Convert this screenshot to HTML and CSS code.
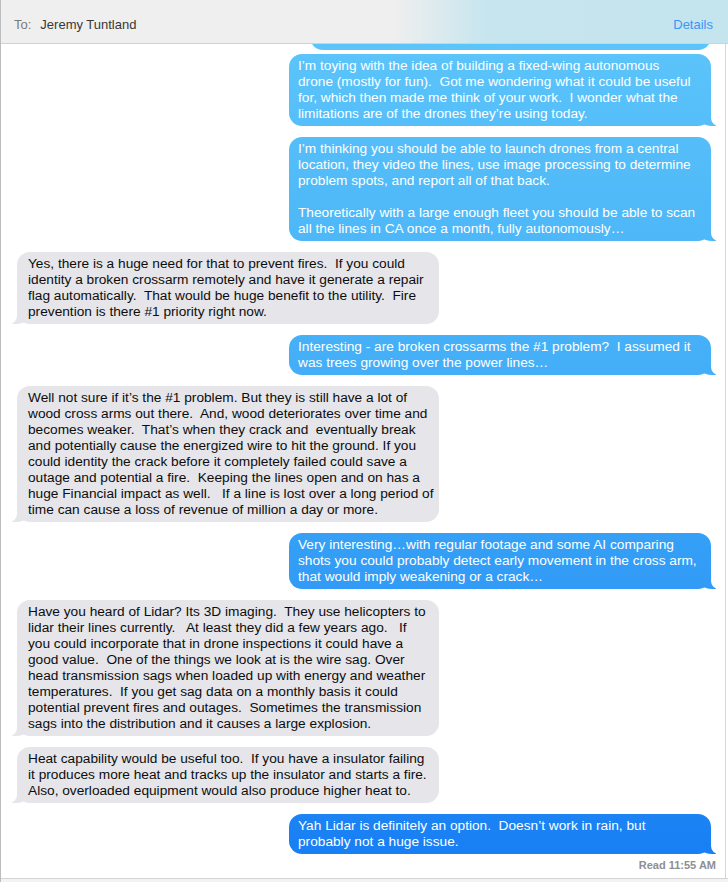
FILE: index.html
```html
<!DOCTYPE html>
<html lang="en">
<head>
<meta charset="utf-8">
<title>Messages – Jeremy Tuntland</title>
<link rel="stylesheet" href="styles.css">
</head>
<body>
<div class="window">
  <header class="bar">
    <span class="to">To:</span>
    <span class="name">Jeremy Tuntland</span>
    <span class="details">Details</span>
  </header>
  <main class="thread">
    <div class="msg out partial">&nbsp;</div>
    <div class="msg out first">I’m toying with the idea of building a fixed-wing autonomous<br>drone (mostly for fun).&nbsp; Got me wondering what it could be useful<br>for, which then made me think of your work.&nbsp; I wonder what the<br>limitations are of the drones they’re using today.</div>
    <div class="msg out">I’m thinking you should be able to launch drones from a central<br>location, they video the lines, use image processing to determine<br>problem spots, and report all of that back.<br><br>Theoretically with a large enough fleet you should be able to scan<br>all the lines in CA once a month, fully autonomously…</div>
    <div class="msg in">Yes, there is a huge need for that to prevent fires.&nbsp; If you could<br>identity a broken crossarm remotely and have it generate a repair<br>flag automatically.&nbsp; That would be huge benefit to the utility.&nbsp; Fire<br>prevention is there #1 priority right now.</div>
    <div class="msg out">Interesting - are broken crossarms the #1 problem?&nbsp; I assumed it<br>was trees growing over the power lines…</div>
    <div class="msg in">Well not sure if it’s the #1 problem. But they is still have a lot of<br>wood cross arms out there.&nbsp; And, wood deteriorates over time and<br>becomes weaker.&nbsp; That’s when they crack and&nbsp; eventually break<br>and potentially cause the energized wire to hit the ground. If you<br>could identity the crack before it completely failed could save a<br>outage and potential a fire.&nbsp; Keeping the lines open and on has a<br>huge Financial impact as well.&nbsp;&nbsp; If a line is lost over a long period of<br>time can cause a loss of revenue of million a day or more.</div>
    <div class="msg out">Very interesting…with regular footage and some AI comparing<br>shots you could probably detect early movement in the cross arm,<br>that would imply weakening or a crack…</div>
    <div class="msg in">Have you heard of Lidar? Its 3D imaging.&nbsp; They use helicopters to<br>lidar their lines currently.&nbsp;&nbsp; At least they did a few years ago.&nbsp;&nbsp; If<br>you could incorporate that in drone inspections it could have a<br>good value.&nbsp; One of the things we look at is the wire sag. Over<br>head transmission sags when loaded up with energy and weather<br>temperatures.&nbsp; If you get sag data on a monthly basis it could<br>potential prevent fires and outages.&nbsp; Sometimes the transmission<br>sags into the distribution and it causes a large explosion.</div>
    <div class="msg in">Heat capability would be useful too.&nbsp; If you have a insulator failing<br>it produces more heat and tracks up the insulator and starts a fire.<br>Also, overloaded equipment would also produce higher heat to.</div>
    <div class="msg out">Yah Lidar is definitely an option.&nbsp; Doesn’t work in rain, but<br>probably not a huge issue.</div>
    <div class="read">Read 11:55 AM</div>
  </main>
  <footer class="bottom"></footer>
</div>
</body>
</html>
```
FILE: styles.css
```css
* { box-sizing: border-box; }
html, body { margin: 0; padding: 0; background: #fff; }
body {
  font-family: "Liberation Sans", Arial, sans-serif;
  font-size: 13px;
  color: #0d0d0d;
}
.window {
  width: 728px;
  height: 882px;
  border-left: 1px solid #bdbdbd;
  display: flex;
  flex-direction: column;
  overflow: hidden;
}
.bar {
  flex: 0 0 44px;
  height: 44px;
  border-bottom: 1px solid #d2d2d2;
  background: linear-gradient(90deg, #efefef 0%, #efefef 54%, #c6e5ee 67%, #c4e4ee 100%);
  display: flex;
  align-items: center;
  padding: 5px 15px 0 13px;
}
.to { color: #7b7b7b; margin-right: 9px; }
.name { color: #383838; }
.details { margin-left: auto; color: #3b96f4; }

.thread {
  flex: 1 1 auto;
  margin-right: 2px;
  border-right: 1px solid #d6d6d6;
  overflow: hidden;
  display: flex;
  flex-direction: column;
  padding: 0 14px 0 16px;
}
.msg {
  position: relative;
  isolation: isolate;
  width: 422px;
  padding: 4px 10px 4px 10px;
  font-size: 13.7px;
  line-height: 16px;
  border-radius: 13px;
  margin-top: 11px;
  white-space: nowrap;
  flex: 0 0 auto;
}
.out {
  align-self: flex-end;
  color: #fff;
  padding-left: 9px;
  background: linear-gradient(180deg, #5fc7fa 0%, #3eaaf7 50%, #167cf4 100%) fixed;
}
.in {
  align-self: flex-start;
  background: #e5e5ea;
  padding-left: 11px;
}
.out::before, .out::after, .in::before, .in::after {
  content: "";
  position: absolute;
  bottom: 0;
  z-index: -1;
  height: 18px;
}
.out::before {
  right: -5px;
  width: 20px;
  background: inherit;
  border-bottom-left-radius: 16px 14px;
}
.out::after {
  right: -20px;
  width: 20px;
  background: #fff;
  border-bottom-left-radius: 8px;
}
.in::before {
  left: -5px;
  width: 20px;
  background: #e5e5ea;
  border-bottom-right-radius: 16px 14px;
}
.in::after {
  left: -20px;
  width: 20px;
  background: #fff;
  border-bottom-right-radius: 8px;
}
.partial {
  width: 401px;
  height: 40px;
  margin-top: -34px;
}
.partial::before, .partial::after { display: none; }
.first { margin-top: 4px; }
.read {
  align-self: flex-end;
  margin-top: 4px;
  margin-right: -5px;
  font-size: 11px;
  font-weight: bold;
  color: #8e8e93;
  line-height: 14px;
}
.bottom {
  flex: 0 0 4px;
  border-top: 1px solid #d4d4d4;
  background: #f3f3f3;
}
```
